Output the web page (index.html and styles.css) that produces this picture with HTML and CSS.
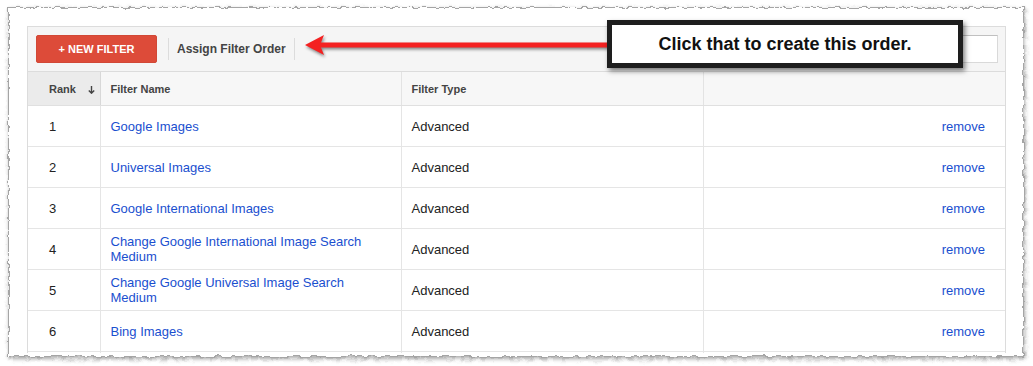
FILE: index.html
```html
<!DOCTYPE html>
<html lang="en">
<head>
  <meta charset="UTF-8">
  <title>Filters</title>
  <link rel="stylesheet" href="styles.css">
</head>
<body>

  <!-- torn paper edge -->
  <svg class="defs" width="0" height="0">
    <filter id="torn" x="-2%" y="-5%" width="104%" height="110%">
      <feTurbulence type="fractalNoise" baseFrequency="0.15" numOctaves="2" seed="4" result="noise"/>
      <feDisplacementMap in="SourceGraphic" in2="noise" scale="5" xChannelSelector="R" yChannelSelector="G"/>
    </filter>
  </svg>

  <div class="page">
    <div class="sheet">
      <div class="sheet-body">
        <div class="panel">

          <div class="toolbar">
            <button class="btn-new">+ NEW FILTER</button>
            <span class="sep"></span>
            <span class="toolbar-link">Assign Filter Order</span>
            <span class="sep sep-after"></span>
            <input class="search" type="text">
          </div>

          <table class="filters">
            <colgroup>
              <col class="c-rank">
              <col class="c-name">
              <col class="c-type">
              <col>
            </colgroup>
            <thead>
              <tr>
                <th class="rank">Rank<svg class="sort" width="7" height="8" viewBox="0 0 7 8">
                    <path d="M3.5 0V7M0.8 4.4L3.5 7.2L6.2 4.4" fill="none" stroke="#444" stroke-width="1.4"/>
                  </svg></th>
                <th>Filter Name</th>
                <th>Filter Type</th>
                <th class="last"></th>
              </tr>
            </thead>
            <tbody>
              <tr>
                <td class="num">1</td>
                <td class="name"><a href="#">Google Images</a></td>
                <td>Advanced</td>
                <td class="act"><a href="#">remove</a></td>
              </tr>
              <tr>
                <td class="num">2</td>
                <td class="name"><a href="#">Universal Images</a></td>
                <td>Advanced</td>
                <td class="act"><a href="#">remove</a></td>
              </tr>
              <tr>
                <td class="num">3</td>
                <td class="name"><a href="#">Google International Images</a></td>
                <td>Advanced</td>
                <td class="act"><a href="#">remove</a></td>
              </tr>
              <tr>
                <td class="num">4</td>
                <td class="name"><a href="#">Change Google International Image Search Medium</a></td>
                <td>Advanced</td>
                <td class="act"><a href="#">remove</a></td>
              </tr>
              <tr>
                <td class="num">5</td>
                <td class="name"><a href="#">Change Google Universal Image Search Medium</a></td>
                <td>Advanced</td>
                <td class="act"><a href="#">remove</a></td>
              </tr>
              <tr>
                <td class="num">6</td>
                <td class="name"><a href="#">Bing Images</a></td>
                <td>Advanced</td>
                <td class="act"><a href="#">remove</a></td>
              </tr>
              <tr>
                <td></td>
                <td></td>
                <td></td>
                <td class="act"></td>
              </tr>
            </tbody>
          </table>

        </div>
      </div>
    </div>

    <!-- annotation -->
    <svg class="arrow" width="312" height="32" viewBox="0 0 312 32">
      <polygon points="4,15 23,5 20,12.5 312,12.5 312,17.5 20,17.5 23,25" fill="#f42121"/>
    </svg>
    <div class="callout">Click that to create this order.</div>
  </div>

</body>
</html>
```

FILE: styles.css
```css
body { margin: 0; background: #fff; font-family: "Liberation Sans", Arial, sans-serif; }
.defs { position: absolute; }

.page {
  position: relative;
  height: 366px;
  padding: 7px 9px 0 8px;
  box-sizing: border-box;
}
.sheet { position: relative; height: 350px; }
.sheet::before {
  content: "";
  position: absolute;
  top: 0; left: 0; right: 0; bottom: 0;
  background: #fff;
  border: 1px solid #a5a5a5;
  box-shadow: 1px 2px 4px rgba(0, 0, 0, .35);
  filter: url(#torn);
}
.sheet-body {
  position: relative;
  height: 346px;
  box-sizing: border-box;
  padding: 19px 18px 0 19px;
  overflow: hidden;
}

.panel {
  border: 1px solid #dcdcdc;
  border-bottom: none;
  background: #fff;
}

/* toolbar */
.toolbar {
  display: flex;
  align-items: center;
  height: 44px;
  padding: 0 7px 0 8px;
  background: #f5f5f5;
  border-bottom: 1px solid #dcdcdc;
}
.btn-new {
  width: 121px;
  height: 28px;
  padding: 0;
  background: #dd4b39;
  border: 1px solid #d14836;
  border-radius: 2px;
  color: #fff;
  font: bold 11px "Liberation Sans", Arial, sans-serif;
}
.sep {
  width: 1px;
  height: 22px;
  background: #dcdcdc;
  margin: 0 8px 0 11px;
}
.sep-after { margin-left: 8px; }
.toolbar-link { font-size: 12px; font-weight: bold; color: #444; }
.search {
  margin-left: auto;
  width: 200px;
  height: 28px;
  box-sizing: border-box;
  border: 1px solid #d9d9d9;
  border-top-color: #c0c0c0;
  background: #fff;
}

/* table */
.filters {
  width: 100%;
  border-collapse: collapse;
  table-layout: fixed;
  font-size: 13px;
}
.c-rank { width: 72px; }
.c-name { width: 301px; }
.c-type { width: 302px; }

.filters th {
  height: 33px;
  padding: 0 10px;
  background: #f7f7f7;
  color: #444;
  font-size: 11px;
  font-weight: bold;
  text-align: left;
  white-space: nowrap;
  border-right: 1px solid #e3e3e3;
  border-bottom: 1px solid #e0e0e0;
}
.filters th.rank {
  padding: 0 0 0 21px;
  background: #ebebeb;
  border-right-color: #d8d8d8;
}
.filters th.last, .filters td.act { border-right: none; }
.sort { margin-left: 12px; vertical-align: -1px; }

.filters td {
  height: 40px;
  padding: 0 10px;
  line-height: 15px;
  color: #222;
  border-right: 1px solid #e5e5e5;
  border-bottom: 1px solid #e5e5e5;
}
.filters td.num { padding-left: 21px; }
.filters td.name { padding-right: 24px; }
.filters td.act { text-align: right; padding-right: 20px; }
.filters a { color: #1a4fcf; text-decoration: none; }

/* annotation */
.arrow {
  position: absolute;
  left: 301px;
  top: 30px;
  filter: drop-shadow(1px 2px 1.5px rgba(0, 0, 0, .45));
}
.callout {
  position: absolute;
  left: 607px;
  top: 20px;
  width: 356px;
  height: 48px;
  box-sizing: border-box;
  border: 5px solid #1e1e1e;
  background: #fff;
  box-shadow: 2px 3px 5px rgba(0, 0, 0, .5);
  color: #111;
  font-size: 18px;
  font-weight: bold;
  line-height: 38px;
  text-align: center;
}
```
